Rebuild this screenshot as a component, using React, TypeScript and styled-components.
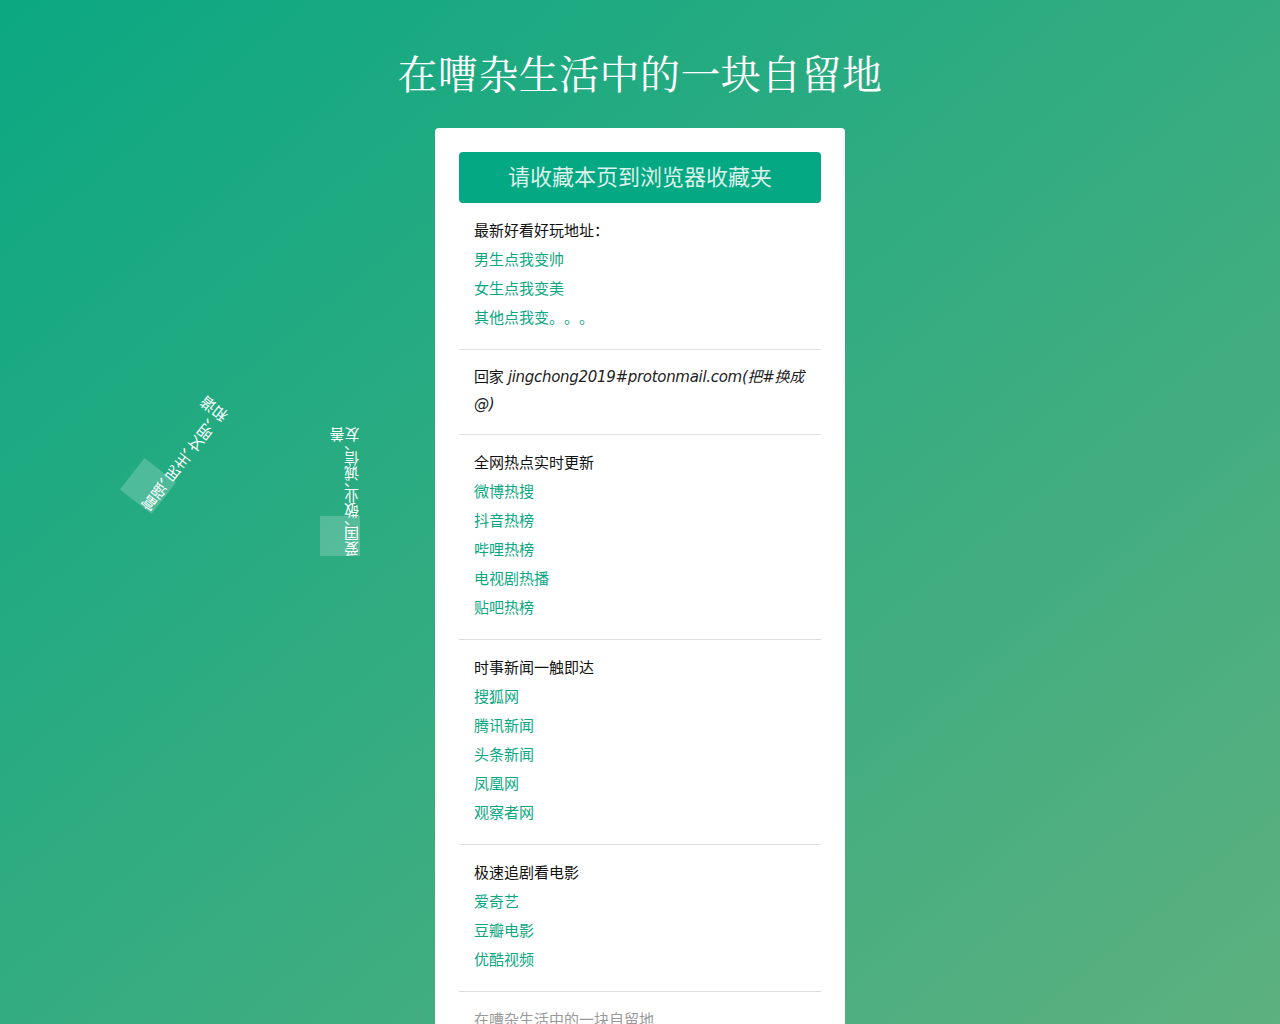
import React from 'react'
import styled, { createGlobalStyle } from 'styled-components'

const GlobalStyle = createGlobalStyle`
    html, body {
        margin: 0;
        padding: 0;
    }
    body {
        font-family: "DejaVu Sans", "Noto Sans CJK SC", sans-serif;
        background: linear-gradient(to bottom right, #0ba882, #5eb07f);
        min-height: 100vh;
        text-spacing-trim: space-all;
    }
`

const StyledPage = styled.div`
    position: relative;
    min-height: 1024px;
    padding-top: 48px;
    box-sizing: border-box;
    overflow: hidden;
`

const StyledTitle = styled.h1`
    margin: 0 0 32px;
    font-family: "Noto Serif CJK SC", "Liberation Serif", "Noto Sans CJK SC", serif;
    font-size: 40px;
    font-weight: normal;
    line-height: 48px;
    letter-spacing: 0.4px;
    color: #ffffff;
    text-align: center;
`

const StyledCard = styled.div`
    width: 410px;
    margin: 0 auto;
    padding: 24px 24px 0;
    box-sizing: border-box;
    background-color: #ffffff;
    border-radius: 4px;
`

const StyledBanner = styled.div`
    height: 51px;
    line-height: 51px;
    border-radius: 4px;
    background-color: #04a883;
    color: #dcf2ea;
    font-size: 22px;
    text-align: center;
`

const StyledSection = styled.div<{ $last?: boolean }>`
    padding: 14px 15px 16px;
    border-bottom: ${(p) => (p.$last ? 'none' : '1px solid #dddddd')};
`

const StyledHeading = styled.div`
    font-size: 15px;
    line-height: 29px;
    color: #111111;
`

const StyledLink = styled.a`
    display: block;
    font-size: 15px;
    line-height: 29px;
    color: #0aa882;
    text-decoration: none;
`

const StyledMail = styled.p`
    margin: 0;
    font-size: 15px;
    line-height: 27px;
    letter-spacing: -0.3px;
    color: #111111;
    em {
        font-style: italic;
        color: #222222;
    }
`

const StyledFooter = styled.div`
    font-size: 15px;
    line-height: 29px;
    color: #9a9a9a;
`

// floating "core values" click effect, captured mid-animation
const StyledValueTag = styled.div`
    position: absolute;
    width: 40px;
    height: 40px;
    background-color: rgba(255, 255, 255, 0.2);
    writing-mode: vertical-lr;
    text-orientation: upright;
    white-space: nowrap;
    font-family: "Noto Sans CJK SC", sans-serif;
    font-size: 15px;
    line-height: 17px;
    font-feature-settings: "vhal" 1;
    color: #ffffff;
    transform-origin: center;
`

const StyledValueTail = styled.span`
    display: inline-block;
    writing-mode: horizontal-tb;
    line-height: 15px;
    margin-right: -15px;
`

const App = () => {
    return (
        <StyledPage>
            <GlobalStyle />
            <StyledTitle>在嘈杂生活中的一块自留地</StyledTitle>

            <StyledValueTag style={{ left: 128, top: 466, transform: 'rotate(218deg)' }}>
                富强、民主、文明、<StyledValueTail>和谐</StyledValueTail>
            </StyledValueTag>
            <StyledValueTag style={{ left: 320, top: 516, transform: 'rotate(180deg)' }}>
                爱国、敬业、诚信、<StyledValueTail>友善</StyledValueTail>
            </StyledValueTag>

            <StyledCard>
                <StyledBanner>请收藏本页到浏览器收藏夹</StyledBanner>

                <StyledSection>
                    <StyledHeading>最新好看好玩地址：</StyledHeading>
                    <StyledLink href="#">男生点我变帅</StyledLink>
                    <StyledLink href="#">女生点我变美</StyledLink>
                    <StyledLink href="#">其他点我变。。。</StyledLink>
                </StyledSection>

                <StyledSection>
                    <StyledMail>
                        回家 <em>jingchong2019#protonmail.com(把#换成@)</em>
                    </StyledMail>
                </StyledSection>

                <StyledSection>
                    <StyledHeading>全网热点实时更新</StyledHeading>
                    <StyledLink href="#">微博热搜</StyledLink>
                    <StyledLink href="#">抖音热榜</StyledLink>
                    <StyledLink href="#">哔哩热榜</StyledLink>
                    <StyledLink href="#">电视剧热播</StyledLink>
                    <StyledLink href="#">贴吧热榜</StyledLink>
                </StyledSection>

                <StyledSection>
                    <StyledHeading>时事新闻一触即达</StyledHeading>
                    <StyledLink href="#">搜狐网</StyledLink>
                    <StyledLink href="#">腾讯新闻</StyledLink>
                    <StyledLink href="#">头条新闻</StyledLink>
                    <StyledLink href="#">凤凰网</StyledLink>
                    <StyledLink href="#">观察者网</StyledLink>
                </StyledSection>

                <StyledSection>
                    <StyledHeading>极速追剧看电影</StyledHeading>
                    <StyledLink href="#">爱奇艺</StyledLink>
                    <StyledLink href="#">豆瓣电影</StyledLink>
                    <StyledLink href="#">优酷视频</StyledLink>
                </StyledSection>

                <StyledSection $last>
                    <StyledFooter>在嘈杂生活中的一块自留地</StyledFooter>
                </StyledSection>
            </StyledCard>
        </StyledPage>
    )
}
export default App
